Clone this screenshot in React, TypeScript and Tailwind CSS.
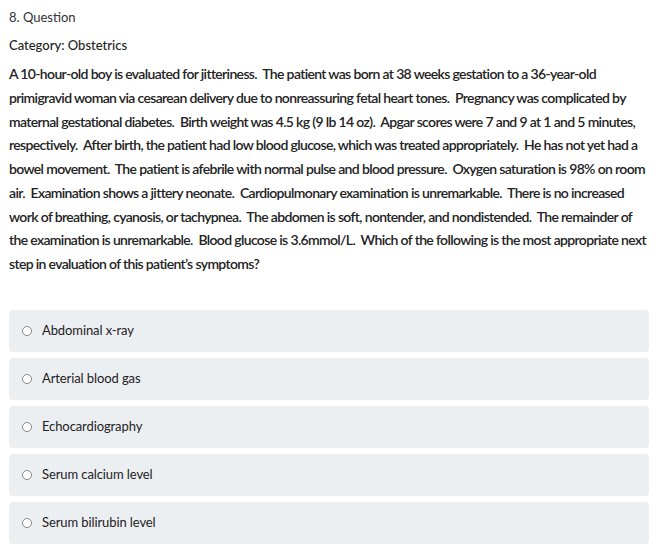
import React from "react";

const options = [
  "Abdominal x-ray",
  "Arterial blood gas",
  "Echocardiography",
  "Serum calcium level",
  "Serum bilirubin level",
];

export default function App() {
  return (
    <div
      className="bg-white w-[662px] h-[558px] px-[9px] text-[#222]"
      style={{ fontFamily: "Lato, 'Noto Sans', sans-serif" }}
    >
      <div className="pt-[7px] text-[13px] leading-[20px] text-[#333]">8. Question</div>
      <div className="mt-[8px] text-[13px] leading-[20px] font-medium text-[#222]">Category: Obstetrics</div>
      <p className="mt-[7px] text-[14px] leading-[23.75px] font-semibold tracking-[-0.65px] text-[#222] w-[640px]">
        A 10-hour-old boy is evaluated for jitteriness.&nbsp; The patient was born at 38 weeks gestation to a 36-year-old primigravid woman via cesarean delivery due to nonreassuring fetal heart tones.&nbsp; Pregnancy was complicated by maternal gestational diabetes.&nbsp; Birth weight was 4.5 kg (9 lb 14 oz).&nbsp; Apgar scores were 7 and 9 at 1 and 5 minutes, respectively.&nbsp; After birth, the patient had low blood glucose, which was treated appropriately.&nbsp; He has not yet had a bowel movement.&nbsp; The patient is afebrile with normal pulse and blood pressure.&nbsp; Oxygen saturation is 98% on room air.&nbsp; Examination shows a jittery neonate.&nbsp; Cardiopulmonary examination is unremarkable.&nbsp; There is no increased work of breathing, cyanosis, or tachypnea.&nbsp; The abdomen is soft, nontender, and nondistended.&nbsp; The remainder of the examination is unremarkable.&nbsp; Blood glucose is 3.6mmol/L.&nbsp; Which of the following is the most appropriate next step in evaluation of this patient’s symptoms?
      </p>
      <div className="mt-[34px] flex flex-col gap-[6px]">
        {options.map((o) => (
          <div
            key={o}
            className="h-[42px] w-[640px] rounded-[4px] bg-[#eceff2] flex items-center pl-[13px] gap-[10px]"
          >
            <span className="w-[10px] h-[10px] rounded-full border border-[#888] bg-white" />
            <span className="text-[13px] text-[#222] tracking-[-0.1px]">{o}</span>
          </div>
        ))}
      </div>
    </div>
  );
}
